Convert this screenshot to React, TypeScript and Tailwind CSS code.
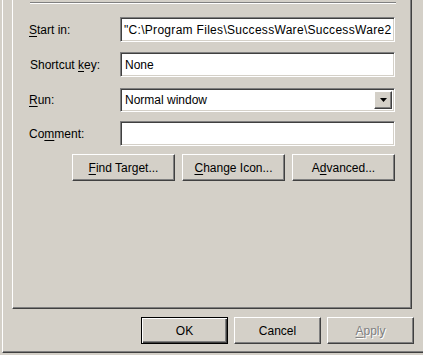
import React from "react";

const FONT = { fontFamily: '"Liberation Sans", Arial, sans-serif' };

// classic 3D borders
const sunken =
  "border border-t-[#808080] border-l-[#808080] border-r-white border-b-white shadow-[inset_1px_1px_#404040,inset_-1px_-1px_#d4d0c8] bg-white";
const raised =
  "border border-t-white border-l-white border-r-[#404040] border-b-[#404040] shadow-[inset_-1px_-1px_#808080] bg-[#d4d0c8]";
const defaultBtn =
  "border border-black shadow-[inset_1px_1px_#fff,inset_-1px_-1px_#404040,inset_-2px_-2px_#808080] bg-[#d4d0c8]";

const Key: React.FC<{ children: React.ReactNode }> = ({ children }) => (
  <span className="underline underline-offset-[2px]">{children}</span>
);

interface FieldRowProps {
  label: React.ReactNode;
  className?: string;
  children: React.ReactNode;
}

const FieldRow: React.FC<FieldRowProps> = ({ label, className, children }) => (
  <div className={`flex items-center ml-[16px] ${className ?? ""}`}>
    <div className="w-[91px] text-[12px] leading-none text-black">{label}</div>
    {children}
  </div>
);

const Button: React.FC<{
  children: React.ReactNode;
  width: string;
  isDefault?: boolean;
  disabled?: boolean;
}> = ({ children, width, isDefault, disabled }) => (
  <button
    className={`${width} h-[27px] flex items-center justify-center text-[12px] leading-none ${
      isDefault ? defaultBtn : raised
    } ${disabled ? "text-[#808080] [text-shadow:1px_1px_#fff]" : "text-black"}`}
    style={FONT}
  >
    {children}
  </button>
);

export default function App() {
  return (
    <div
      className="w-[423px] h-[355px] overflow-hidden bg-[#d4d0c8] pl-[2px]"
      style={FONT}
    >
      {/* window frame */}
      <div className="w-[440px] h-[353px] border-l border-white border-b border-b-[#404040] shadow-[inset_0_-1px_#808080] flex flex-col">
        {/* tab page */}
        <div className="ml-[9px] w-[400px] h-[309px] border-l border-white border-r border-b border-r-[#404040] border-b-[#404040] shadow-[inset_-1px_-1px_#808080] flex flex-col">
          <div className="mt-[2px] ml-[17px] w-[366px] h-[2px] border-t border-[#808080] border-b border-b-white" />

          <FieldRow label={<><Key>S</Key>tart in:</>} className="mt-[13px]">
            <div className={`w-[275px] h-[25px] flex items-center pl-[3px] text-[12px] text-black overflow-hidden whitespace-nowrap tracking-[0.3px] ${sunken}`}>
              "C:\Program Files\SuccessWare\SuccessWare2
            </div>
          </FieldRow>

          <FieldRow
            label={<span className="pl-[1px]">Shortcut <Key>k</Key>ey:</span>}
            className="mt-[10px]"
          >
            <div className={`w-[275px] h-[25px] flex items-center pl-[4px] text-[12px] text-black ${sunken}`}>
              None
            </div>
          </FieldRow>

          <FieldRow label={<><Key>R</Key>un:</>} className="mt-[11px]">
            <div className={`w-[275px] h-[24px] flex items-center p-[2px] ${sunken}`}>
              <span className="flex-1 pl-[2px] text-[12px] text-black">Normal window</span>
              <div className={`w-[18px] h-full flex items-center justify-center ${raised}`}>
                <svg width="7" height="4" viewBox="0 0 7 4">
                  <path d="M0 0h7L3.5 4z" fill="#000" />
                </svg>
              </div>
            </div>
          </FieldRow>

          <FieldRow label={<>Co<Key>m</Key>ment:</>} className="mt-[9px]">
            <div className={`w-[275px] h-[25px] ${sunken}`} />
          </FieldRow>

          <div className="mt-[8px] ml-[59px] flex gap-[7px]">
            <Button width="w-[103px]"><Key>F</Key>ind Target...</Button>
            <Button width="w-[103px]"><Key>C</Key>hange Icon...</Button>
            <Button width="w-[103px]">A<Key>d</Key>vanced...</Button>
          </div>
        </div>

        {/* dialog buttons */}
        <div className="mt-[8px] ml-[138px] flex gap-[6px]">
          <Button width="w-[87px]" isDefault>OK</Button>
          <Button width="w-[87px]">Cancel</Button>
          <Button width="w-[87px]" disabled><Key>A</Key>pply</Button>
        </div>
      </div>
    </div>
  );
}
